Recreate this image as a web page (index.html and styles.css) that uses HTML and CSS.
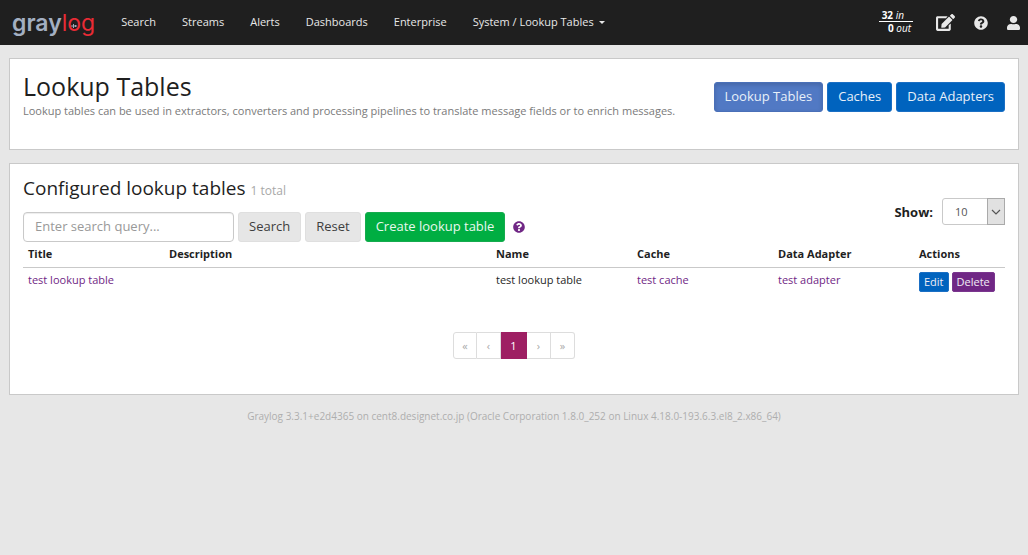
FILE: index.html
```html
<!DOCTYPE html>
<html lang="en">
<head>
<meta charset="utf-8">
<meta name="viewport" content="width=device-width, initial-scale=1">
<title>Graylog - Lookup Tables</title>
<link rel="stylesheet" href="styles.css">
</head>
<body>
<header class="navbar">
  <a class="brand" href="#" aria-label="graylog"><span class="brand-gray">gray</span><span class="brand-log">l<span class="brand-o">o<svg class="brand-mark" viewBox="0 0 6 6" aria-hidden="true"><path d="M0 3h6M2.500 1v4M4.500 2v2" stroke="#a3a9b8" stroke-width="1" fill="none"/></svg></span>g</span></a>
  <nav class="menu">
    <a href="#">Search</a>
    <a href="#">Streams</a>
    <a href="#">Alerts</a>
    <a href="#">Dashboards</a>
    <a href="#">Enterprise</a>
    <a href="#">System / Lookup Tables<span class="caret"></span></a>
  </nav>
  <div class="tools">
    <a class="throughput" href="#"><span class="rate rate-in"><b>32</b> <i>in</i></span><span class="rate"><b>0</b> <i>out</i></span></a>
    <a class="tool" href="#" aria-label="Scratchpad"><svg width="19" height="17" viewBox="0 0 576 512" fill="currentColor"><path d="M402.600 83.200l90.200 90.200c3.800 3.800 3.800 10 0 13.800L274.400 405.600l-92.800 10.300c-12.400 1.400-22.900-9.100-21.500-21.500l10.300-92.800L388.800 83.200c3.800-3.800 10-3.800 13.800 0zm162-22.900l-48.800-48.800c-15.200-15.200-39.900-15.200-55.200 0l-35.400 35.400c-3.800 3.800-3.800 10 0 13.800l90.200 90.200c3.800 3.800 10 3.800 13.800 0l35.400-35.400c15.200-15.300 15.200-40 0-55.200zM384 346.200V448H64V128h229.800c3.200 0 6.200-1.300 8.500-3.500l40-40c7.600-7.600 2.200-20.500-8.500-20.500H48C21.500 64 0 85.500 0 112v352c0 26.500 21.500 48 48 48h352c26.500 0 48-21.500 48-48V306.200c0-10.700-12.900-16-20.500-8.500l-40 40c-2.200 2.300-3.500 5.300-3.500 8.500z"/></svg></a>
    <a class="tool" href="#" aria-label="Help"><svg width="14" height="14" viewBox="0 0 512 512" fill="currentColor"><path d="M504 256c0 137-111 248-248 248S8 393 8 256 119 8 256 8s248 111 248 248zM262.700 90c-54.500 0-89.300 23-116.500 63.800-3.500 5.300-2.400 12.400 2.700 16.300l34.700 26.300c5.200 3.900 12.600 3 16.700-2.100 17.900-22.700 30.100-35.800 57.300-35.800 20.400 0 45.700 13.100 45.700 33 0 15-12.400 22.700-32.500 34C247.100 238.500 216 254.900 216 296v4c0 6.600 5.400 12 12 12h56c6.600 0 12-5.400 12-12v-1.300c0-28.500 83.200-29.600 83.200-106.700 0-58-60.200-102-116.500-102zM256 338c-25.400 0-46 20.600-46 46s20.600 46 46 46 46-20.600 46-46-20.600-46-46-46z"/></svg></a>
    <a class="tool" href="#" aria-label="User"><svg width="13" height="14" viewBox="0 0 448 512" preserveAspectRatio="none" fill="currentColor"><path d="M224 256c70.700 0 128-57.300 128-128S294.700 0 224 0 96 57.300 96 128s57.300 128 128 128zm89.600 32h-16.700c-22.200 10.200-46.900 16-72.900 16s-50.600-5.800-72.900-16h-16.700C60.200 288 0 348.200 0 422.400V464c0 26.500 21.500 48 48 48h352c26.500 0 48-21.500 48-48v-41.600c0-74.200-60.200-134.400-134.400-134.400z"/></svg></a>
  </div>
</header>

<main class="page">
  <section class="panel page-header">
    <div>
      <h1>Lookup Tables</h1>
      <p class="lead">Lookup tables can be used in extractors, converters and processing pipelines to translate message fields or to enrich messages.</p>
    </div>
    <div class="buttons">
      <button class="btn btn-info active" type="button">Lookup Tables</button>
      <button class="btn btn-info" type="button">Caches</button>
      <button class="btn btn-info" type="button">Data Adapters</button>
    </div>
  </section>

  <section class="panel tables">
    <div class="toolbar">
      <div>
        <h2>Configured lookup tables <small>1 total</small></h2>
        <form class="buttons">
          <input class="query" type="text" placeholder="Enter search query..." aria-label="Search query">
          <button class="btn btn-default" type="button">Search</button>
          <button class="btn btn-default" type="button">Reset</button>
          <button class="btn btn-success" type="button">Create lookup table</button>
          <button class="help" type="button" aria-label="Search syntax help"><svg width="12" height="12" viewBox="0 0 512 512" fill="currentColor"><path d="M504 256c0 137-111 248-248 248S8 393 8 256 119 8 256 8s248 111 248 248zM262.700 90c-54.500 0-89.300 23-116.500 63.800-3.500 5.300-2.400 12.400 2.700 16.300l34.700 26.300c5.200 3.900 12.600 3 16.700-2.100 17.900-22.700 30.100-35.800 57.300-35.800 20.400 0 45.700 13.100 45.700 33 0 15-12.400 22.700-32.500 34C247.100 238.500 216 254.900 216 296v4c0 6.600 5.400 12 12 12h56c6.600 0 12-5.400 12-12v-1.300c0-28.500 83.200-29.600 83.200-106.700 0-58-60.200-102-116.500-102zM256 338c-25.400 0-46 20.600-46 46s20.600 46 46 46 46-20.600 46-46-20.600-46-46-46z"/></svg></button>
        </form>
      </div>
      <div class="page-size">
        <label for="page-size">Show:</label>
        <span class="select">
          <select id="page-size"><option>10</option><option>25</option><option>50</option><option>100</option></select>
          <span class="select-arrow"><svg width="10" height="6" viewBox="0 0 10 6" fill="none" stroke="#555" stroke-width="1.200"><path d="M1 1l4 4 4-4"/></svg></span>
        </span>
      </div>
    </div>
    <table>
      <thead>
        <tr><th class="col">Title</th><th>Description</th><th class="col">Name</th><th class="col">Cache</th><th class="col">Data Adapter</th><th class="col-actions">Actions</th></tr>
      </thead>
      <tbody>
        <tr>
          <td><a href="#">test lookup table</a></td>
          <td></td>
          <td>test lookup table</td>
          <td><a href="#">test cache</a></td>
          <td><a href="#">test adapter</a></td>
          <td><div class="actions"><button class="btn-xs edit" type="button">Edit</button><button class="btn-xs delete" type="button">Delete</button></div></td>
        </tr>
      </tbody>
    </table>
    <nav class="pagination" aria-label="Pagination">
      <a href="#" aria-label="First">«</a>
      <a href="#" aria-label="Previous">‹</a>
      <a class="current" href="#" aria-current="page">1</a>
      <a href="#" aria-label="Next">›</a>
      <a href="#" aria-label="Last">»</a>
    </nav>
  </section>
</main>

<footer>Graylog 3.3.1+e2d4365 on cent8.designet.co.jp (Oracle Corporation 1.8.0_252 on Linux 4.18.0-193.6.3.el8_2.x86_64)</footer>
</body>
</html>
```
FILE: styles.css
```css
* { box-sizing: border-box; }

body {
  margin: 0;
  background: #e7e7e7;
  color: #1f1f1f;
  font: 11px/16px "Open Sans", "Noto Sans", sans-serif;
}

a { color: #702785; text-decoration: none; }

button, input, select { font: inherit; margin: 0; }

svg { display: block; }

.navbar {
  display: flex;
  align-items: center;
  height: 45px;
  padding: 0 8px 0 12px;
  background: #1f1f1f;
}

.brand {
  font: 23px/32px Inter, sans-serif;
}

.brand-gray { color: #a3afc2; font-weight: 600; }
.brand-log { color: #e92b35; font-weight: 400; }
.brand-o { position: relative; }

.brand-mark {
  position: absolute;
  left: 4px;
  bottom: 8px;
  width: 6px;
  height: 6px;
}

.menu {
  display: flex;
  gap: 26px;
  margin-left: 26px;
  padding-bottom: 2px;
}

.menu a { color: #e8e8e8; }

.caret {
  display: inline-block;
  margin-left: 5px;
  border: 3px solid transparent;
  border-top-color: #e8e8e8;
  border-bottom: 0;
  vertical-align: middle;
}

.tools {
  display: flex;
  align-items: center;
  gap: 19px;
  margin-left: auto;
}

.tool { color: #e8e8e8; }

.throughput {
  width: 34px;
  margin-right: 4px;
  padding-bottom: 2px;
  color: #fff;
  font-size: 10px;
  line-height: 12px;
}

.rate { display: block; padding-right: 2px; text-align: right; }
.rate-in { padding-right: 9px; border-bottom: 1px solid #fff; }

.page {
  display: grid;
  gap: 13px;
  padding: 13px 9px 0;
}

.panel {
  border: 1px solid #c9c9c9;
  background: #fff;
  padding: 13px;
}

.page-header {
  display: flex;
  justify-content: space-between;
  padding-bottom: 30px;
}

h1 {
  margin: 0 0 2px;
  font-size: 25px;
  font-weight: 400;
  line-height: 29px;
}

.lead { margin: 0; color: #7a7a7a; }

.buttons { display: flex; gap: 4px; }

.page-header .buttons { align-items: flex-start; padding-top: 10px; }

.btn {
  height: 30px;
  padding: 0 10px 2px;
  border: 1px solid;
  border-radius: 3px;
  font-size: 13px;
  line-height: 18px;
  white-space: nowrap;
}

.btn-info { background: #0063be; border-color: #1b6fc4; color: #e8f0f9; }

.btn-info.active {
  background: #5179c4;
  border-color: #4a70b8;
  box-shadow: inset 0 2px 4px rgba(0, 0, 0, .15);
}

.btn-default { background: #e6e6e6; border-color: #dfdfdf; color: #3e3e3e; }
.btn-success { background: #00ae42; border-color: #16ab4e; color: #e8f8ee; }

h2 {
  margin: 0 0 10px;
  font-size: 19px;
  font-weight: 400;
  line-height: 22px;
}

small { color: #a8a8a8; font-size: 12px; }

.tables { padding-bottom: 35px; }

.toolbar {
  display: flex;
  justify-content: space-between;
  align-items: flex-end;
}

.query {
  width: 211px;
  height: 30px;
  padding: 0 11px 2px;
  border: 1px solid #c9c9c9;
  border-radius: 4px;
  box-shadow: inset 0 1px 1px rgba(0, 0, 0, .075);
  font-size: 13px;
}

.query::placeholder { color: #999; }

.help {
  padding: 0 4px;
  border: 0;
  background: none;
  color: #702785;
}

.page-size {
  display: flex;
  align-items: center;
  gap: 9px;
  padding-bottom: 17px;
}

.page-size label { font-size: 13px; font-weight: 700; }

.select {
  display: grid;
  grid-template-columns: 1fr 18px;
  width: 63px;
  height: 27px;
}

.select select {
  grid-area: 1 / 1 / 2 / 3;
  padding: 0 12px;
  border: 1px solid #c9c9c9;
  border-radius: 3px;
  background: #fff;
  color: #555;
  appearance: none;
}

.select-arrow {
  display: grid;
  grid-area: 1 / 2 / 2 / 3;
  place-items: center;
  border: 1px solid #aaa;
  background: #e1e1e1;
  pointer-events: none;
}

table {
  width: 100%;
  border-collapse: collapse;
  table-layout: fixed;
}

.col { width: 141px; }
.col-actions { width: 91px; }

th, td { padding: 4px 5px; text-align: left; vertical-align: top; }
th { padding-bottom: 5px; border-bottom: 1px solid #c9c9c9; }

.actions { display: flex; gap: 3px; }

.btn-xs {
  height: 20px;
  padding: 0 4px;
  border: 1px solid;
  border-radius: 2px;
  color: #f0edf5;
  line-height: 16px;
}

.edit { background: #0063be; border-color: #1b6fc4; }
.delete { background: #702785; border-color: #7a368e; }

.pagination {
  display: flex;
  justify-content: center;
  margin-top: 36px;
}

.pagination a {
  min-width: 24px;
  padding: 5px 8px;
  border: 1px solid #ddd;
  border-left-width: 0;
  color: #a8a8a8;
  line-height: 15px;
  text-align: center;
}

.pagination a:first-child { border-left-width: 1px; border-radius: 3px 0 0 3px; }
.pagination a:last-child { border-radius: 0 3px 3px 0; }
.pagination .current { min-width: 26px; background: #9e1f63; border-color: #9e1f63; color: #fff; }

footer {
  padding: 13px 0;
  color: #aeaeae;
  font-size: 10px;
  text-align: center;
}
```
